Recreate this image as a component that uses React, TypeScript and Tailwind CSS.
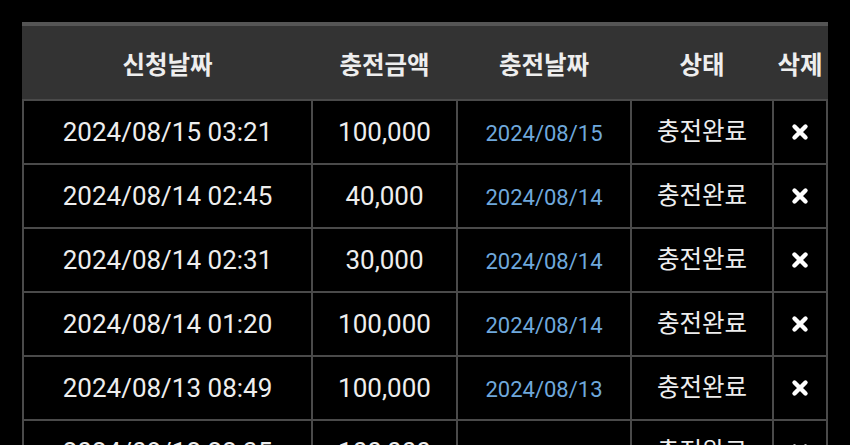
const rows = [
  { requested: "2024/08/15 03:21", amount: "100,000", charged: "2024/08/15" },
  { requested: "2024/08/14 02:45", amount: "40,000", charged: "2024/08/14" },
  { requested: "2024/08/14 02:31", amount: "30,000", charged: "2024/08/14" },
  { requested: "2024/08/14 01:20", amount: "100,000", charged: "2024/08/14" },
  { requested: "2024/08/13 08:49", amount: "100,000", charged: "2024/08/13" },
  { requested: "2024/08/12 22:35", amount: "100,000", charged: "2024/08/12" },
];

const cols = "grid grid-cols-[287px_143px_172px_140px_52px] gap-x-[2px] px-[2px]";

function DeleteIcon() {
  return (
    <svg width="18" height="18" viewBox="0 0 18 18" aria-hidden="true">
      <path d="M3.5 3.5 L14.5 14.5 M14.5 3.5 L3.5 14.5" stroke="#fff" strokeWidth="4.4" strokeLinecap="round" />
    </svg>
  );
}

export default function App() {
  return (
    <div
      className="h-[445px] w-[850px] overflow-hidden bg-black pt-[22px] pl-[22px]"
      style={{ fontFamily: 'Roboto, "Noto Sans CJK KR", sans-serif' }}
    >
      <div className="w-[806px]">
        <div className={`${cols} h-[77px] border-t-4 border-[#555] bg-[#333] pt-[7px] text-[24.5px] font-bold text-[#eee]`}>
          <div className="flex items-center justify-center">신청날짜</div>
          <div className="flex items-center justify-center">충전금액</div>
          <div className="flex items-center justify-center">충전날짜</div>
          <div className="flex items-center justify-center">상태</div>
          <div className="flex items-center justify-center">삭제</div>
        </div>
        <div className="flex flex-col gap-[2px] bg-[#4a4a4a] pt-[2px]">
          {rows.map((row, i) => (
            <div key={i} className={`${cols} h-[62px]`}>
              <div className="flex items-center justify-center bg-black text-[26px] text-[#eee]">{row.requested}</div>
              <div className="flex items-center justify-center bg-black text-[26px] text-[#eee]">{row.amount}</div>
              <div className="flex items-center justify-center bg-black pt-[2px] text-[22px] text-[#6fa8dc]">{row.charged}</div>
              <div className="flex items-center justify-center bg-black text-[24.5px] text-[#eee]">충전완료</div>
              <div className="flex items-center justify-center bg-black">
                <DeleteIcon />
              </div>
            </div>
          ))}
        </div>
      </div>
    </div>
  );
}
